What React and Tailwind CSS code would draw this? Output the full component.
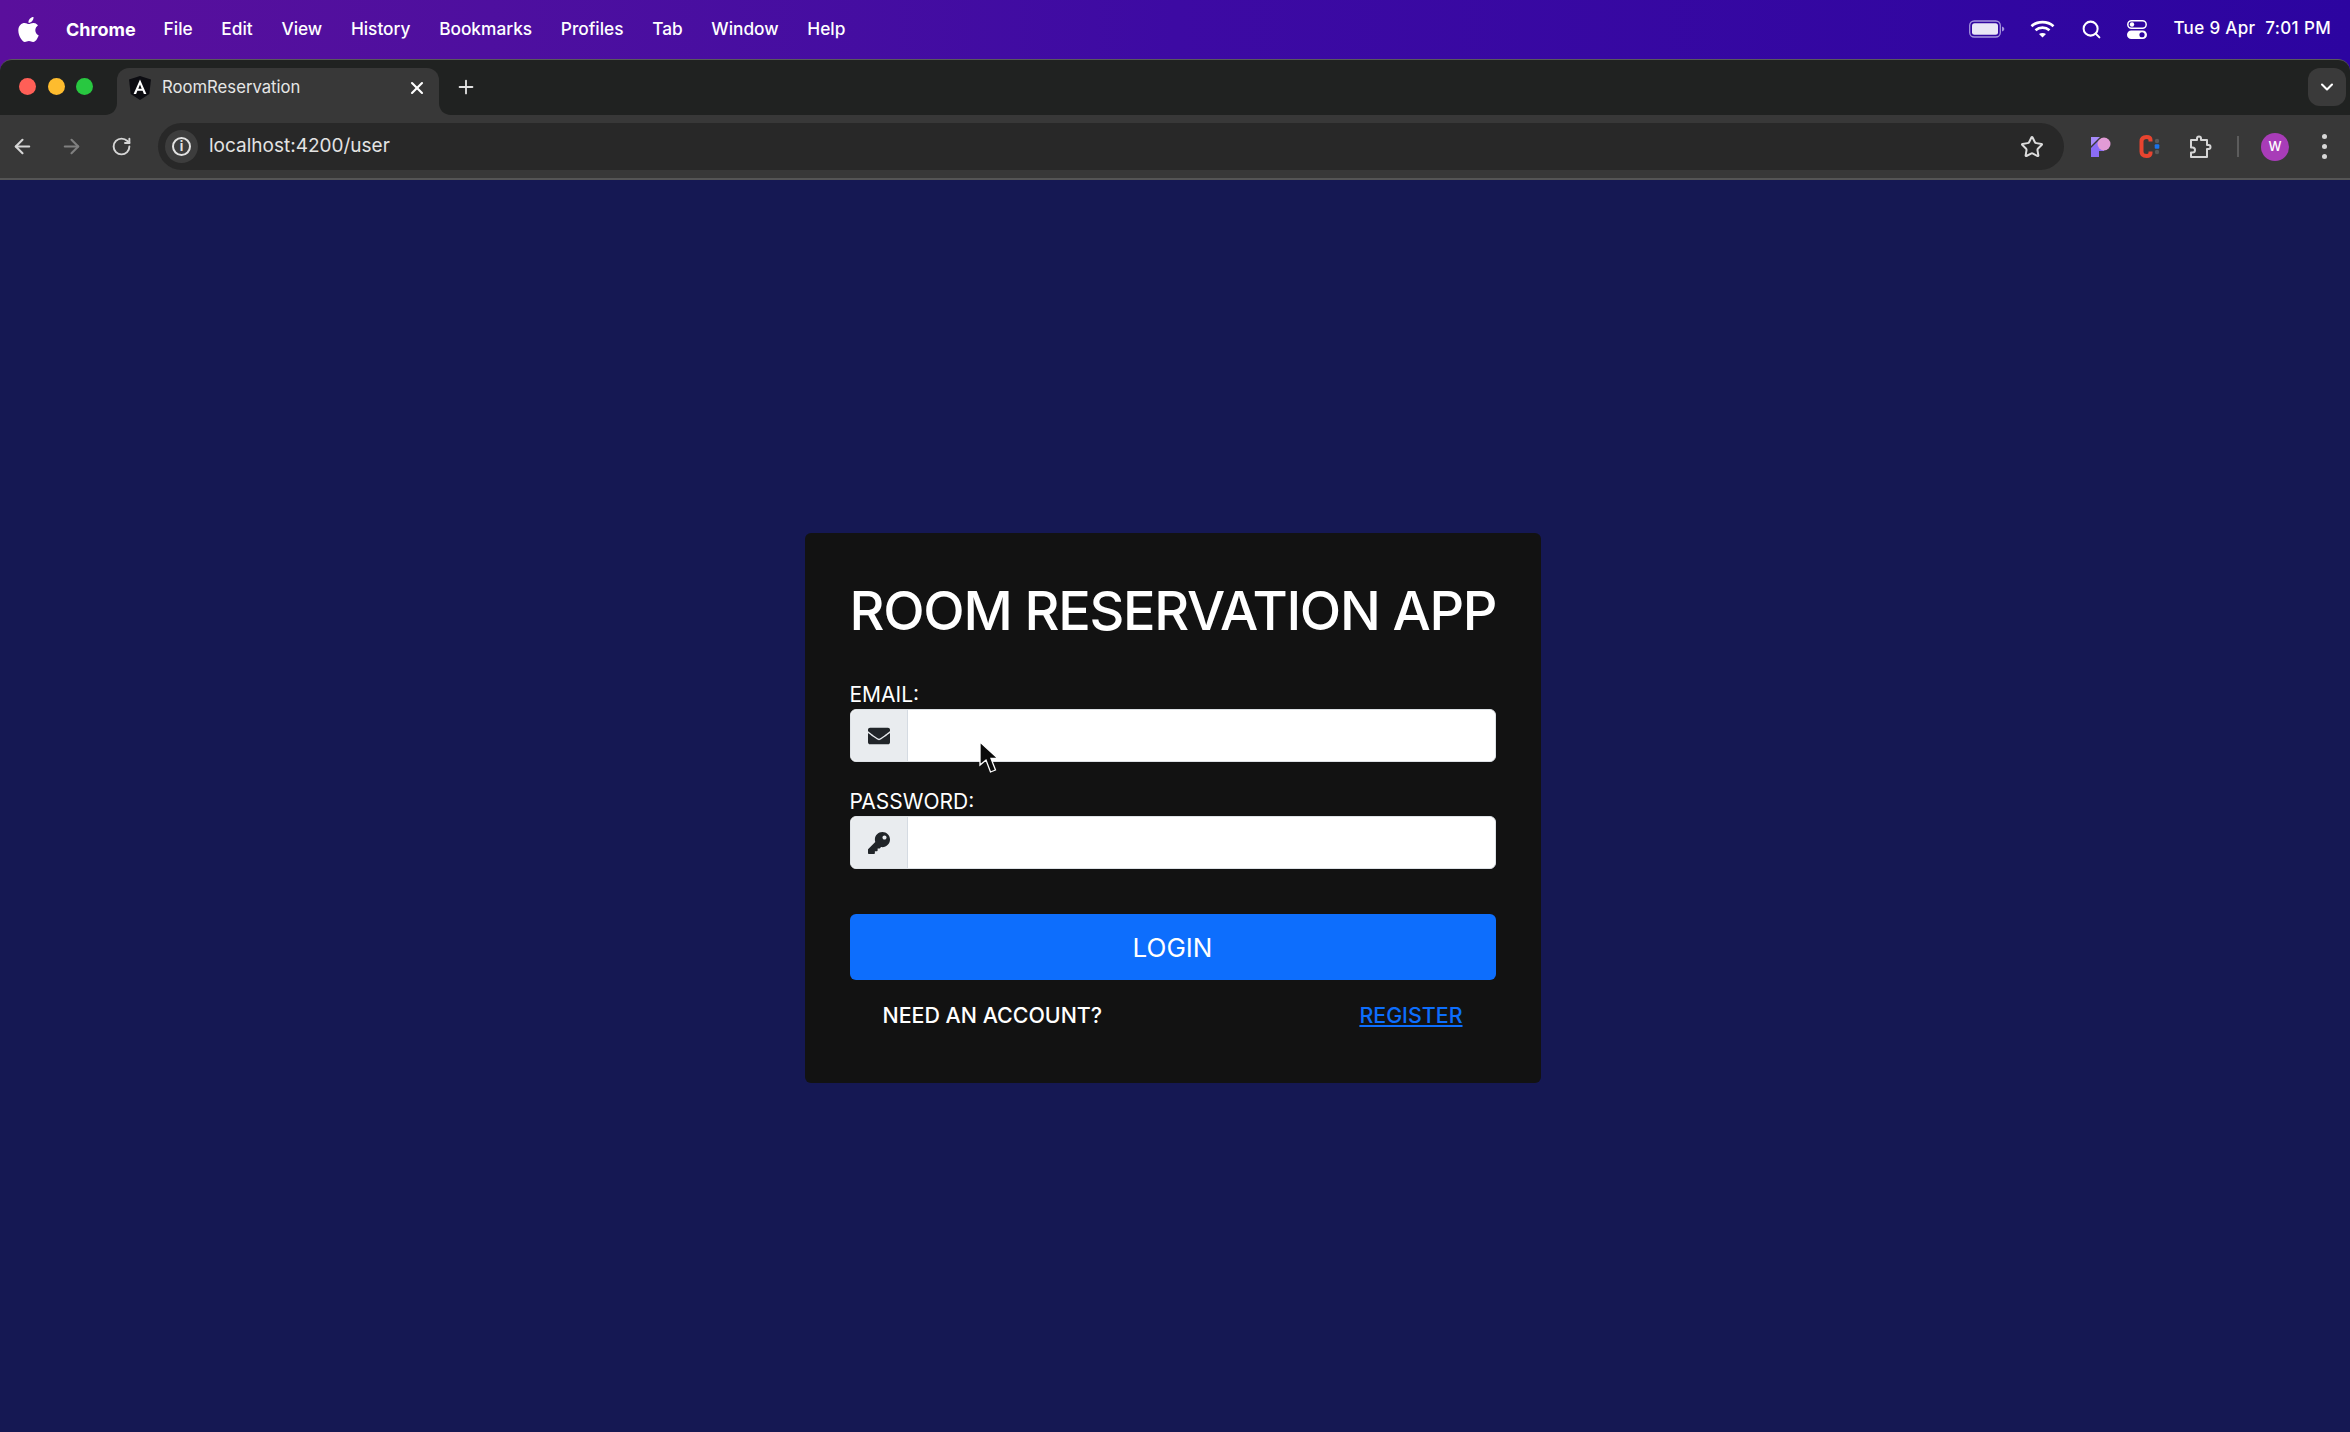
import React from "react";
import { FaEnvelope, FaKey } from "react-icons/fa";
import { ArrowLeft, ArrowRight, RotateCw, Star, Plus, X, ChevronDown, Search } from "lucide-react";

const menu = ["File", "Edit", "View", "History", "Bookmarks", "Profiles", "Tab", "Window", "Help"];

function Apple() {
  return (
    <svg width="21" height="25" viewBox="0 0 814 1000" fill="#fff">
      <path d="M788 341c-6 4-108 62-108 190 0 149 131 202 135 203-1 3-21 72-69 142-43 62-88 123-156 123s-86-40-164-40c-76 0-103 41-165 41s-105-57-155-127C48 791 0 662 0 539c0-197 128-301 254-301 67 0 123 44 165 44 40 0 102-47 178-47 29 0 133 3 191 106zM554 157c31-37 54-89 54-141 0-7-1-14-2-20-51 2-111 34-147 76-28 32-55 84-55 137 0 8 1 16 2 18 3 1 9 2 14 2 45 0 103-31 134-72z" />
    </svg>
  );
}

function Battery() {
  return (
    <svg width="36" height="18" viewBox="0 0 36 18">
      <rect x="0.7" y="1" width="30.6" height="16" rx="4.5" fill="none" stroke="#a493dc" strokeWidth="1.3" />
      <rect x="3" y="3.2" width="26" height="11.6" rx="2.5" fill="#e9e6f6" />
      <path d="M33 6.5c1.5.4 2.3 1.4 2.3 2.5s-.8 2.100-2.300 2.500z" fill="#a493dc" />
    </svg>
  );
}

function Wifi() {
  return (
    <svg width="25" height="18" viewBox="0 0 25 18" fill="none" stroke="#fff" strokeWidth="2.700" strokeLinecap="butt">
      <path d="M1.500 6.200C7.500.8 17.500.8 23.500 6.200" />
      <path d="M5.500 10.200c4-3.400 10-3.400 14 0" />
      <path d="M12.500 17.500 9 14c2-1.500 5-1.500 7 0z" fill="#fff" stroke="none" />
    </svg>
  );
}

function Control() {
  return (
    <svg width="20" height="19" viewBox="0 0 20 19">
      <rect x="0.800" y="0.800" width="18.400" height="7.400" rx="3.700" fill="none" stroke="#fff" strokeWidth="1.500" />
      <circle cx="5" cy="4.500" r="2.200" fill="#fff" />
      <rect x="0" y="10.500" width="20" height="8.500" rx="4.250" fill="#fff" />
      <circle cx="15" cy="14.750" r="2.600" fill="#2c04a0" />
    </svg>
  );
}

function Angular() {
  return (
    <svg width="22" height="24" viewBox="0 0 22 24">
      <path d="M11 0 22 3.600 20.300 18 11 24 1.700 18 0 3.600z" fill="#0d0d12" />
      <path d="M11 3.500 4.600 18h2.500l1.300-3.200h5.200l1.300 3.200h2.500zM9.300 12.700 11 8.500l1.700 4.200z" fill="#fff" />
    </svg>
  );
}

function PatreonLike() {
  return (
    <svg width="20" height="22" viewBox="0 0 20 22">
      <path d="M0 1h9L0 10z" fill="#a78bfa" />
      <path d="M0 12 8 4h5v11H8v6H0z" fill="#8b6cf6" />
      <circle cx="13" cy="8" r="6.500" fill="#e29bd6" />
    </svg>
  );
}

function CExt() {
  return (
    <svg width="21" height="23" viewBox="0 0 21 23">
      <path d="M11.500 6.500V5C11.500 3 10.500 2 7.500 2 4 2 2.500 3.500 2.500 6.500v10c0 3 1.500 4.500 5 4.500 3 0 4-1 4-3v-1.500" fill="none" stroke="#e8442f" strokeWidth="4" />
      <circle cx="18" cy="6" r="2.200" fill="#5a5a5a" />
      <rect x="15.700" y="9.200" width="4.600" height="4.600" rx="1" fill="#1a73e8" />
      <circle cx="18" cy="17" r="2.200" fill="#5a5a5a" />
    </svg>
  );
}

function Puzzle() {
  return (
    <svg width="24" height="24" viewBox="0 0 24 24" fill="none" stroke="#d6d6d6" strokeWidth="2" strokeLinejoin="round">
      <path d="M2 5h6V3.500a2 2 0 0 1 4 0V5h6v5h1.500a2 2 0 0 1 0 4H18v8H2v-4.500h1.500a2.500 2.500 0 0 0 0-5H2z" />
    </svg>
  );
}

function Cursor() {
  return (
    <svg width="20" height="33" viewBox="0 0 20 33" className="absolute left-[128px] top-[31px]">
      <path d="M1 1v23l6-5 4.500 12 5-2-4.500-11.500H19z" fill="#0a0a0a" stroke="#fff" strokeWidth="1.300" />
    </svg>
  );
}

function Corner({ side }) {
  const d = side === "left" ? "M12 0v12H0C7 12 12 7 12 0z" : "M0 0v12h12C5 12 0 7 0 0z";
  return (
    <svg width="12" height="12" viewBox="0 0 12 12" className={side === "left" ? "absolute bottom-0 left-[-12px]" : "absolute bottom-0 right-[-12px]"}>
      <path d={d} fill="#383838" />
    </svg>
  );
}

function Field({ label, icon, mt, children }) {
  return (
    <div className={mt}>
      <label className="block text-[21px] leading-[25px] text-white">{label}</label>
      <div className="relative mt-[2px] flex h-[53px] rounded-[6px] border border-[#dee2e6] bg-white">
        <span className="flex w-[57px] items-center justify-center rounded-l-[6px] border-r border-[#d5dbe2] bg-[#e9ecef] text-[#212529]">
          {icon}
        </span>
        <input className="min-w-0 flex-1 rounded-r-[6px] bg-white outline-none" aria-label={label} />
        {children}
      </div>
    </div>
  );
}

export default function App() {
  return (
    <div className="flex h-screen w-full flex-col overflow-hidden bg-[#151853] font-['Inter',sans-serif]">
      <div className="bg-gradient-to-r from-[#5a0f9c] via-[#3d0aa3] to-[#2c04a0]">
        <div className="flex h-[59px] items-center justify-between pb-[1px] pl-[18px] pr-[19px] text-[17.300px] text-white">
          <div className="flex items-center">
            <Apple />
            <span className="ml-[27px] text-[18px] font-bold">Chrome</span>
            <div className="ml-[28px] flex gap-[28.700px] font-medium">
              {menu.map((m) => (
                <span key={m}>{m}</span>
              ))}
            </div>
          </div>
          <div className="flex items-center">
            <Battery />
            <span className="ml-[25px]"><Wifi /></span>
            <Search size={21} strokeWidth={2.300} className="ml-[26px]" />
            <span className="ml-[25px]"><Control /></span>
            <span className="ml-[26px] whitespace-pre text-[17px] font-medium tracking-[0.35px]">Tue 9 Apr  7:01 PM</span>
          </div>
        </div>
        <div className="flex h-[56px] items-end justify-between rounded-t-[12px] border-t border-[#5a5a5a] bg-[#202221] pl-[19px] pr-[4px]">
          <div className="flex items-end">
            <div className="mb-[20px] flex gap-[11.500px]">
              <span className="h-[17px] w-[17px] rounded-full bg-[#ff5f57]" />
              <span className="h-[17px] w-[17px] rounded-full bg-[#febc2e]" />
              <span className="h-[17px] w-[17px] rounded-full bg-[#28c840]" />
            </div>
            <div className="relative ml-[24px] flex h-[47px] w-[322px] items-center rounded-t-[12px] bg-[#383838] pb-[7px] pl-[12px] pr-[12px] text-[#e6e6e6]">
              <Corner side="left" />
              <Corner side="right" />
              <Angular />
              <span className="ml-[11px] flex-1 text-[16.700px]">RoomReservation</span>
              <X size={20} strokeWidth={2.500} className="text-white" />
            </div>
            <Plus size={22} strokeWidth={2} className="mb-[17px] ml-[16px] text-[#e2e2e2]" />
          </div>
          <div className="mb-[9px] flex h-[38px] w-[38px] items-center justify-center rounded-[12px] bg-[#3a3a3a] text-white">
            <ChevronDown size={20} strokeWidth={2.500} />
          </div>
        </div>
      </div>

      <div className="flex h-[65px] items-center border-b-2 border-[#555555] bg-[#383838] pl-[11px] pr-[15px]">
        <ArrowLeft size={23} strokeWidth={2.200} className="text-[#d6d6d6]" />
        <ArrowRight size={23} strokeWidth={2.200} className="ml-[26px] text-[#808080]" />
        <RotateCw size={21} strokeWidth={2.200} className="ml-[28px] text-[#d6d6d6]" />
        <div className="ml-[26px] flex h-[47px] w-[1906px] items-center rounded-full bg-[#282828] pl-[7px] pr-[20px]">
          <span className="flex h-[33px] w-[33px] items-center justify-center rounded-full bg-[#3d3d3d]">
            <span className="flex h-[19px] w-[19px] items-center justify-center rounded-full border-2 border-[#e2e2e2] text-[13px] font-bold leading-none text-[#e2e2e2]">i</span>
          </span>
          <span className="ml-[11px] flex-1 text-[19px] text-[#e3e3e3]">localhost:4200/user</span>
          <Star size={24} strokeWidth={2} className="text-[#dcdcdc]" />
        </div>
        <span className="ml-[27px]"><PatreonLike /></span>
        <span className="ml-[28px]"><CExt /></span>
        <span className="ml-[29px]"><Puzzle /></span>
        <span className="ml-[24px] h-[21px] w-[2px] bg-[#5c5c5c]" />
        <span className="ml-[22px] flex h-[28px] w-[28px] items-center justify-center rounded-full bg-[#a83cb8] text-[13px] font-medium text-white">W</span>
        <div className="ml-[33px] flex flex-col gap-[5px]">
          <span className="h-[5px] w-[5px] rounded-full bg-[#d6d6d6]" />
          <span className="h-[5px] w-[5px] rounded-full bg-[#d6d6d6]" />
          <span className="h-[5px] w-[5px] rounded-full bg-[#d6d6d6]" />
        </div>
      </div>

      <main className="flex flex-1 items-start justify-center pr-[5px] pt-[353px]">
        <div className="w-[736px] rounded-[6px] bg-[#121212] px-[45px] pb-[53px] pt-[42px]">
          <h1 className="text-[54px] leading-[72px] font-medium whitespace-nowrap text-white tracking-[-1.300px]">ROOM RESERVATION APP</h1>
          <div className="mt-[35px]">
            <Field label="EMAIL:" icon={<FaEnvelope size={22} />}>
              <Cursor />
            </Field>
            <Field label="PASSWORD:" icon={<FaKey size={22} />} mt="mt-[27px]" />
          </div>
          <button className="mt-[45px] h-[66px] w-full rounded-[6px] bg-[#0d6efd] text-[26px] text-white">LOGIN</button>
          <div className="mt-[20px] flex items-center justify-between px-[33px] text-[21.400px] leading-[30px]">
            <span className="font-medium text-white">NEED AN ACCOUNT?</span>
            <a className="font-medium text-[#0d6efd] underline">REGISTER</a>
          </div>
        </div>
      </main>
    </div>
  );
}
